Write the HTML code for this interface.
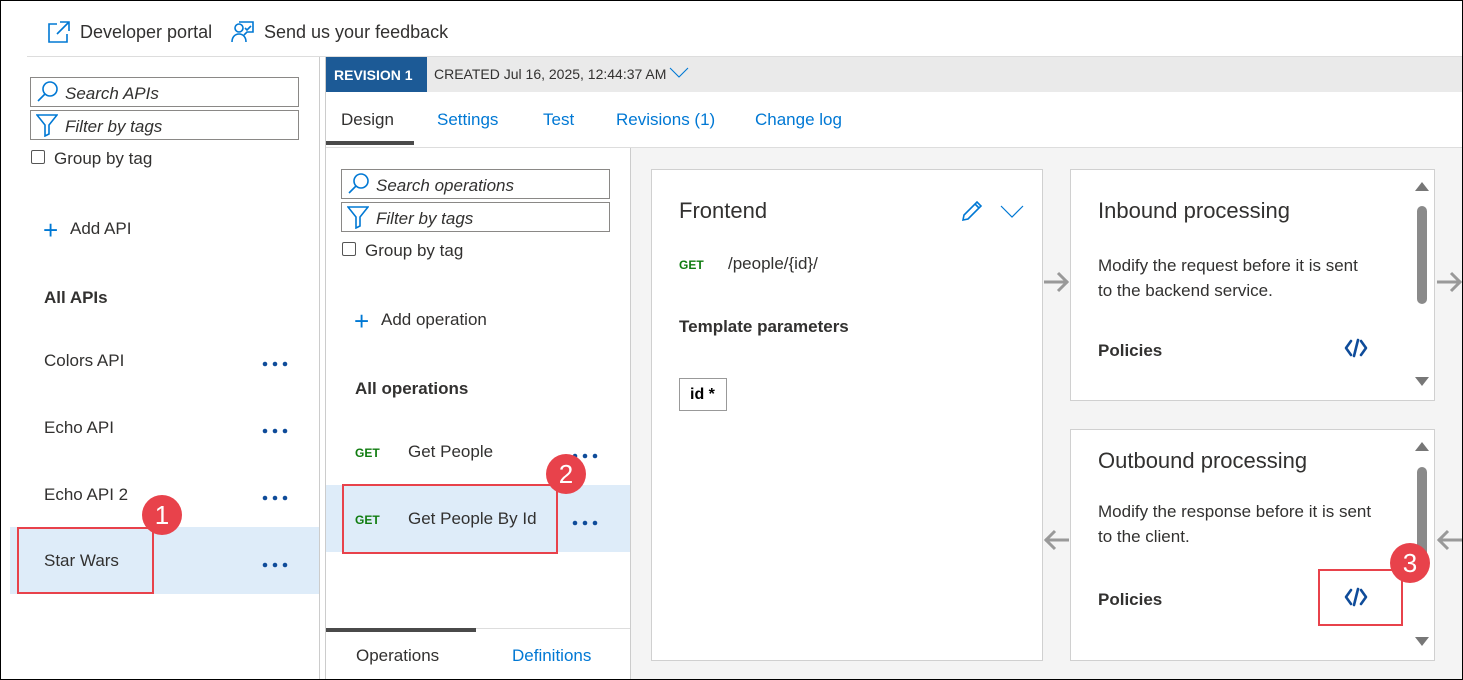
<!DOCTYPE html>
<html><head><meta charset="utf-8"><style>
*{box-sizing:border-box;margin:0;padding:0}
body{width:1463px;height:680px;overflow:hidden;background:#fff;font-family:"Liberation Sans",sans-serif;color:#323130;position:relative}
.a{position:absolute;white-space:nowrap}
.blue{color:#0078d4}
.inp{position:absolute;border:1px solid #8a8886;height:30px;font-style:italic;font-size:17px;color:#323130;padding:6px 0 0 34px}
.cb{position:absolute;width:14px;height:14px;border:1px solid #555;border-radius:2px}
.get{position:absolute;color:#107c10;font-weight:bold;font-size:12px}
.red{position:absolute;border:2px solid #e8424b}
.badge{position:absolute;width:40px;height:40px;border-radius:50%;background:#e8424b;color:#fff;font-size:26px;text-align:center;line-height:40px}
.card{position:absolute;background:#fff;border:1px solid #d0d0d0}
.sb{position:absolute;width:10px;background:#8a8a8a;border-radius:5px}
</style></head><body>
<svg width="0" height="0" style="position:absolute"><defs>
<g id="dots"><circle cx="3" cy="3" r="2.3" fill="#0f4c9a"/><circle cx="13" cy="3" r="2.3" fill="#0f4c9a"/><circle cx="23" cy="3" r="2.3" fill="#0f4c9a"/></g>
<g id="code" fill="none" stroke="#0f4c9a" stroke-width="2.6" stroke-linecap="round" stroke-linejoin="round"><path d="M7 3L2 10l5 7M17 3l5 7-5 7M14 2L10 18"/></g>
</defs></svg>
<!-- top bar -->
<svg class="a" style="left:47px;top:20px" width="24" height="24" viewBox="0 0 24 24" fill="none" stroke="#0078d4" stroke-width="1.6"><path d="M10 4H2v18h18v-8"/><path d="M13 2h9v9M22 2L10 14"/></svg>
<div class="a" style="left:80px;top:22px;font-size:18px">Developer portal</div>
<svg class="a" style="left:230px;top:20px" width="26" height="24" viewBox="0 0 26 24" fill="none" stroke="#0078d4" stroke-width="1.6"><circle cx="9" cy="8" r="4"/><path d="M2 22c0-5 3-8 7-8s7 3 7 8"/><path d="M9 2h14v10h-6l-3 3"/><path d="M15 8l2 2 4-4"/></svg>
<div class="a" style="left:264px;top:22px;font-size:18px">Send us your feedback</div>
<div class="a" style="left:27px;top:56px;width:1436px;height:1px;background:#ddd"></div>
<!-- left panel -->
<div class="a" style="left:319px;top:57px;width:1px;height:623px;background:#ccc"></div>
<div class="inp" style="left:30px;top:77px;width:269px">Search APIs</div>
<svg class="a" style="left:36px;top:80px" width="24" height="24" viewBox="0 0 24 24" fill="none" stroke="#0078d4" stroke-width="1.6"><circle cx="14" cy="9" r="7"/><path d="M9 14L2 21"/></svg>
<div class="inp" style="left:30px;top:110px;width:269px">Filter by tags</div>
<svg class="a" style="left:36px;top:113px" width="22" height="24" viewBox="0 0 22 24" fill="none" stroke="#0078d4" stroke-width="1.6"><path d="M1 2h20l-8 10v9l-4 2V12z"/></svg>
<div class="cb" style="left:31px;top:150px"></div>
<div class="a" style="left:54px;top:149px;font-size:17px">Group by tag</div>
<div class="a" style="left:43px;top:215px;font-size:26px;font-weight:200;color:#0078d4">+</div>
<div class="a" style="left:70px;top:219px;font-size:17px">Add API</div>
<div class="a" style="left:44px;top:288px;font-size:17px;font-weight:bold">All APIs</div>
<div class="a" style="left:44px;top:351px;font-size:17px">Colors API</div><svg class="a" style="left:262px;top:361px" width="27" height="6"><use href="#dots"/></svg>
<div class="a" style="left:44px;top:418px;font-size:17px">Echo API</div><svg class="a" style="left:262px;top:428px" width="27" height="6"><use href="#dots"/></svg>
<div class="a" style="left:44px;top:485px;font-size:17px">Echo API 2</div><svg class="a" style="left:262px;top:495px" width="27" height="6"><use href="#dots"/></svg>
<div class="a" style="left:10px;top:527px;width:309px;height:67px;background:#deecf9"></div>
<div class="a" style="left:44px;top:551px;font-size:17px">Star Wars</div><svg class="a" style="left:262px;top:562px" width="27" height="6"><use href="#dots"/></svg>
<div class="red" style="left:17px;top:527px;width:137px;height:67px"></div>
<div class="badge" style="left:142px;top:495px">1</div>
<!-- revision bar -->
<div class="a" style="left:325px;top:57px;width:1px;height:623px;background:#ccc"></div>
<div class="a" style="left:326px;top:57px;width:1137px;height:35px;background:#eaeaea"></div>
<div class="a" style="left:326px;top:57px;width:101px;height:35px;background:#1c5a96;color:#fff;font-weight:bold;font-size:14px;padding:10px 0 0 8px">REVISION 1</div>
<div class="a" style="left:434px;top:66px;font-size:14px">CREATED Jul 16, 2025, 12:44:37 AM</div>
<svg class="a" style="left:669px;top:67px" width="20" height="12" viewBox="0 0 20 12" fill="none" stroke="#0078d4" stroke-width="1.1"><path d="M1 1l9 9 9-9"/></svg>
<!-- tabs -->
<div class="a" style="left:341px;top:110px;font-size:17px">Design</div>
<div class="a blue" style="left:437px;top:110px;font-size:17px">Settings</div>
<div class="a blue" style="left:543px;top:110px;font-size:17px">Test</div>
<div class="a blue" style="left:616px;top:110px;font-size:17px">Revisions (1)</div>
<div class="a blue" style="left:755px;top:110px;font-size:17px">Change log</div>
<div class="a" style="left:326px;top:147px;width:1137px;height:1px;background:#ddd"></div>
<div class="a" style="left:326px;top:141px;width:88px;height:4px;background:#4a4a4a"></div>
<!-- ops panel -->
<div class="a" style="left:630px;top:148px;width:1px;height:532px;background:#ccc"></div>
<div class="inp" style="left:341px;top:169px;width:269px">Search operations</div>
<svg class="a" style="left:347px;top:172px" width="24" height="24" viewBox="0 0 24 24" fill="none" stroke="#0078d4" stroke-width="1.6"><circle cx="14" cy="9" r="7"/><path d="M9 14L2 21"/></svg>
<div class="inp" style="left:341px;top:202px;width:269px">Filter by tags</div>
<svg class="a" style="left:347px;top:205px" width="22" height="24" viewBox="0 0 22 24" fill="none" stroke="#0078d4" stroke-width="1.6"><path d="M1 2h20l-8 10v9l-4 2V12z"/></svg>
<div class="cb" style="left:342px;top:242px"></div>
<div class="a" style="left:365px;top:241px;font-size:17px">Group by tag</div>
<div class="a" style="left:354px;top:306px;font-size:26px;font-weight:200;color:#0078d4">+</div>
<div class="a" style="left:381px;top:310px;font-size:17px">Add operation</div>
<div class="a" style="left:355px;top:379px;font-size:17px;font-weight:bold">All operations</div>
<div class="get" style="left:355px;top:446px">GET</div>
<div class="a" style="left:408px;top:442px;font-size:17px">Get People</div>
<svg class="a" style="left:572px;top:453px" width="27" height="6"><use href="#dots"/></svg>
<div class="a" style="left:326px;top:485px;width:304px;height:67px;background:#deecf9"></div>
<div class="get" style="left:355px;top:513px">GET</div>
<div class="a" style="left:408px;top:509px;font-size:17px">Get People By Id</div>
<svg class="a" style="left:572px;top:520px" width="27" height="6"><use href="#dots"/></svg>
<div class="red" style="left:342px;top:484px;width:216px;height:70px"></div>
<div class="badge" style="left:546px;top:454px">2</div>
<div class="a" style="left:326px;top:628px;width:304px;height:1px;background:#ddd"></div>
<div class="a" style="left:326px;top:628px;width:150px;height:4px;background:#4a4a4a"></div>
<div class="a" style="left:356px;top:646px;font-size:17px">Operations</div>
<div class="a blue" style="left:512px;top:646px;font-size:17px">Definitions</div>
<!-- content -->
<div class="a" style="left:631px;top:148px;width:832px;height:532px;background:#f4f4f4"></div>
<div class="card" style="left:651px;top:169px;width:392px;height:492px"></div>
<div class="a" style="left:679px;top:198px;font-size:22px">Frontend</div>
<svg class="a" style="left:960px;top:199px" width="24" height="24" viewBox="0 0 24 24" fill="none" stroke="#0078d4" stroke-width="1.6"><path d="M3 21l1-5L17 3l4 4L8 20z M15 5l4 4"/></svg>
<svg class="a" style="left:1000px;top:204px" width="24" height="14" viewBox="0 0 24 14" fill="none" stroke="#0078d4" stroke-width="1.2"><path d="M1 2l11 11L23 2"/></svg>
<div class="get" style="left:679px;top:258px">GET</div>
<div class="a" style="left:728px;top:254px;font-size:17px">/people/{id}/</div>
<div class="a" style="left:679px;top:317px;font-size:17px;font-weight:bold">Template parameters</div>
<div class="a" style="left:679px;top:378px;width:48px;height:33px;border:1px solid #999;font-weight:bold;font-size:16px;padding:7px 0 0 10px;color:#000">id *</div>
<!-- inbound -->
<div class="card" style="left:1070px;top:169px;width:365px;height:232px"></div>
<div class="a" style="left:1098px;top:198px;font-size:22px">Inbound processing</div>
<div class="a" style="left:1098px;top:253px;font-size:17px;line-height:25px">Modify the request before it is sent<br>to the backend service.</div>
<div class="a" style="left:1098px;top:341px;font-size:17px;font-weight:bold">Policies</div>
<svg class="a" style="left:1344px;top:338px" width="24" height="20"><use href="#code"/></svg>
<div class="sb" style="left:1417px;top:206px;height:98px"></div>
<div class="a" style="left:1415px;top:182px;width:0;height:0;border:7px solid transparent;border-bottom:9px solid #777;border-top:0"></div>
<div class="a" style="left:1415px;top:377px;width:0;height:0;border:7px solid transparent;border-top:9px solid #777;border-bottom:0"></div>
<!-- outbound -->
<div class="card" style="left:1070px;top:429px;width:365px;height:232px"></div>
<div class="a" style="left:1098px;top:448px;font-size:22px">Outbound processing</div>
<div class="a" style="left:1098px;top:499px;font-size:17px;line-height:25px">Modify the response before it is sent<br>to the client.</div>
<div class="a" style="left:1098px;top:590px;font-size:17px;font-weight:bold">Policies</div>
<svg class="a" style="left:1344px;top:587px" width="24" height="20"><use href="#code"/></svg>
<div class="sb" style="left:1417px;top:467px;height:98px"></div>
<div class="a" style="left:1415px;top:442px;width:0;height:0;border:7px solid transparent;border-bottom:9px solid #777;border-top:0"></div>
<div class="a" style="left:1415px;top:637px;width:0;height:0;border:7px solid transparent;border-top:9px solid #777;border-bottom:0"></div>
<div class="red" style="left:1318px;top:569px;width:85px;height:57px"></div>
<div class="badge" style="left:1390px;top:543px">3</div>
<!-- arrows -->
<svg class="a" style="left:1043px;top:270px" width="27" height="24" viewBox="0 0 27 24" fill="none" stroke="#999" stroke-width="3"><path d="M1 12h24M15 3l9 9-9 9"/></svg>
<svg class="a" style="left:1436px;top:270px" width="27" height="24" viewBox="0 0 27 24" fill="none" stroke="#999" stroke-width="3"><path d="M1 12h24M15 3l9 9-9 9"/></svg>
<svg class="a" style="left:1043px;top:528px" width="27" height="24" viewBox="0 0 27 24" fill="none" stroke="#999" stroke-width="3"><path d="M26 12H2M12 3l-9 9 9 9"/></svg>
<svg class="a" style="left:1436px;top:528px" width="27" height="24" viewBox="0 0 27 24" fill="none" stroke="#999" stroke-width="3"><path d="M26 12H2M12 3l-9 9 9 9"/></svg>
<div class="a" style="left:0;top:0;width:1463px;height:680px;border:1px solid #000;pointer-events:none"></div>
</body></html>
